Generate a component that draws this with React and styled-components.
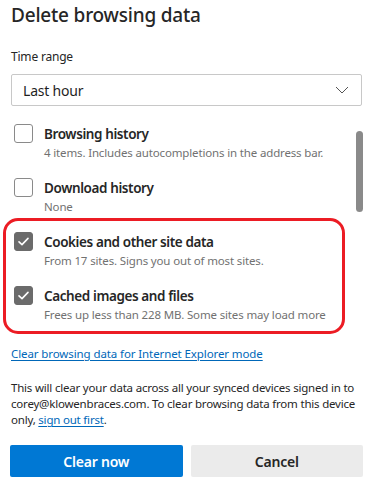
import React from 'react'
import styled, { createGlobalStyle } from 'styled-components'

const Global = createGlobalStyle`
  body {
    margin: 0;
    background: #ffffff;
    font-family: "Noto Sans", "Open Sans", sans-serif;
    color: #1b1b1b;
  }
`

const Dialog = styled.div`
  position: relative;
  width: 373px;
  height: 488px;
  padding: 0 11px;
  box-sizing: border-box;
`

const Title = styled.h1`
  margin: 0;
  padding-top: 1px;
  font-size: 19px;
  font-weight: 500;
  letter-spacing: -0.2px;
  line-height: 28px;
  color: #262626;
`

const FieldLabel = styled.div`
  margin-top: 20px;
  font-size: 12px;
  letter-spacing: -0.2px;
  line-height: 16px;
  color: #262626;
`

const Select = styled.div`
  margin-top: 9px;
  height: 32px;
  border: 1px solid #c8c8c8;
  border-radius: 2px;
  box-sizing: border-box;
  display: flex;
  align-items: center;
  justify-content: space-between;
  padding: 0 12px 0 11px;
  font-size: 14px;
  letter-spacing: -0.2px;
  color: #1f1f1f;
`

const ListArea = styled.div`
  margin-top: 17px;
  height: 212px;
  display: flex;
  justify-content: space-between;
`

const List = styled.div`
  display: flex;
  flex-direction: column;
  gap: 17px;
  padding-top: 1px;
`

const Item = styled.div`
  display: flex;
  gap: 11px;
  padding-left: 3px;
`

const Box = styled.div`
  width: 19px;
  height: 19px;
  flex-shrink: 0;
  box-sizing: border-box;
  border-radius: 3px;
  border: 1px solid ${p => (p.checked ? '#6b6b6b' : '#8a8a8a')};
  background: ${p => (p.checked ? '#6b6b6b' : '#ffffff')};
  display: flex;
  align-items: center;
  justify-content: center;
`

const ItemText = styled.div`
  display: flex;
  flex-direction: column;
`

const ItemLabel = styled.div`
  font-size: 13.5px;
  font-weight: 600;
  letter-spacing: -0.4px;
  line-height: 20px;
  color: #262626;
`

const ItemDesc = styled.div`
  font-size: 11.5px;
  letter-spacing: -0.15px;
  line-height: 17px;
  color: #717171;
  white-space: nowrap;
`

const Scrollbar = styled.div`
  width: 7px;
  height: 81px;
  margin-top: 8px;
  margin-right: -1px;
  border-radius: 4px;
  background: #8a8a8a;
`

const Highlight = styled.div`
  position: absolute;
  left: 3px;
  top: 218px;
  width: 342px;
  height: 116px;
  box-sizing: border-box;
  border: 3px solid #ec1c24;
  border-radius: 15px;
  pointer-events: none;
`

const Link = styled.a`
  display: inline-block;
  margin-top: 11px;
  font-size: 11.5px;
  letter-spacing: -0.1px;
  line-height: 16px;
  color: #0067b8;
  text-decoration: underline;
  text-underline-offset: 2px;
`

const InlineLink = styled.a`
  color: #0067b8;
  text-decoration: underline;
  text-underline-offset: 2px;
`

const Note = styled.p`
  margin: 17px 0 0;
  font-size: 11.5px;
  letter-spacing: -0.2px;
  line-height: 16px;
  color: #262626;
`

const Buttons = styled.div`
  margin-top: 17px;
  display: grid;
  grid-template-columns: 1fr 1fr;
  gap: 8px;
  margin-left: -1px;
  margin-right: -1px;
`

const Button = styled.button`
  height: 32px;
  border: none;
  border-radius: 2px;
  font-family: inherit;
  font-size: 14px;
  font-weight: 600;
  letter-spacing: -0.2px;
  background: ${p => (p.primary ? '#0078d4' : '#ebebeb')};
  color: ${p => (p.primary ? '#ffffff' : '#262626')};
`

const Check = () => (
  <svg width="13" height="13" viewBox="0 0 13 13">
    <path d="M2 6.8 L5 9.6 L11 3.4" fill="none" stroke="#fff" strokeWidth="1.6" strokeLinecap="round" strokeLinejoin="round" />
  </svg>
)

const Chevron = () => (
  <svg width="14" height="8" viewBox="0 0 14 8">
    <path d="M1 1 L7 7 L13 1" fill="none" stroke="#555" strokeWidth="1" />
  </svg>
)

const items = [
  { label: 'Browsing history', desc: '4 items. Includes autocompletions in the address bar.', checked: false },
  { label: 'Download history', desc: 'None', checked: false },
  { label: 'Cookies and other site data', desc: 'From 17 sites. Signs you out of most sites.', checked: true },
  { label: 'Cached images and files', desc: 'Frees up less than 228 MB. Some sites may load more', checked: true }
]

export default function App() {
  return (
    <Dialog>
      <Global />
      <Title>Delete browsing data</Title>
      <FieldLabel>Time range</FieldLabel>
      <Select>
        <span>Last hour</span>
        <Chevron />
      </Select>
      <ListArea>
        <List>
          {items.map(item => (
            <Item key={item.label}>
              <Box checked={item.checked}>{item.checked && <Check />}</Box>
              <ItemText>
                <ItemLabel>{item.label}</ItemLabel>
                <ItemDesc>{item.desc}</ItemDesc>
              </ItemText>
            </Item>
          ))}
        </List>
        <Scrollbar />
      </ListArea>
      <Highlight />
      <Link href="#">Clear browsing data for Internet Explorer mode</Link>
      <Note>
        This will clear your data across all your synced devices signed in to<br />
        corey@klowenbraces.com. To clear browsing data from this device<br />
        only, <InlineLink href="#">sign out first</InlineLink>.
      </Note>
      <Buttons>
        <Button primary>Clear now</Button>
        <Button>Cancel</Button>
      </Buttons>
    </Dialog>
  )
}
